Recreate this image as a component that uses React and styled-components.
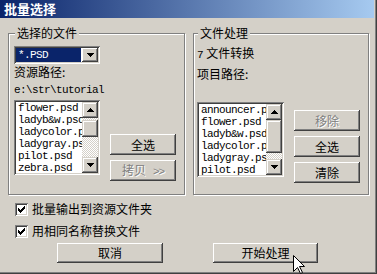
import React from "react";
import styled, { createGlobalStyle } from "styled-components";

const GlobalStyle = createGlobalStyle`
  html, body {
    margin: 0;
    padding: 0;
    background: #d4d0c8;
  }
  body {
    font-family: "Noto Sans CJK SC", "Liberation Sans", sans-serif;
    font-size: 12px;
    color: #000;
  }
`;

const raised = `
  box-shadow: inset -1px -1px 0 #404040, inset 1px 1px 0 #ffffff,
    inset -2px -2px 0 #808080;
`;

const sunken = `
  box-shadow: inset 1px 1px 0 #808080, inset -1px -1px 0 #ffffff,
    inset 2px 2px 0 #404040, inset -2px -2px 0 #d4d0c8;
`;

const leftFiles = [
  "flower.psd",
  "ladyb&w.psd",
  "ladycolor.psd",
  "ladygray.psd",
  "pilot.psd",
  "zebra.psd",
];

const rightFiles = [
  "announcer.psd",
  "flower.psd",
  "ladyb&w.psd",
  "ladycolor.psd",
  "ladygray.psd",
  "pilot.psd",
];

function Arrow({ down }) {
  return (
    <svg width="7" height="4" viewBox="0 0 7 4" shapeRendering="crispEdges">
      {down ? (
        <path d="M0 0h7v1h-1v1h-1v1h-1v1h-1v-1h-1v-1h-1v-1h-1z" fill="#000" />
      ) : (
        <path d="M3 0h1v1h1v1h1v1h1v1h-7v-1h1v-1h1v-1h1z" fill="#000" />
      )}
    </svg>
  );
}

function Check() {
  const cols = [2, 3, 4, 3, 2, 1, 0];
  return (
    <svg width="7" height="7" viewBox="0 0 7 7" shapeRendering="crispEdges">
      {cols.map((y, x) => (
        <rect key={x} x={x} y={y} width="1" height="3" fill="#000" />
      ))}
    </svg>
  );
}

function Cursor() {
  return (
    <svg width="13" height="20" viewBox="0 0 13 20">
      <path
        d="M0.5 0.5 L0.5 16.5 L4.5 12.5 L7.5 18.5 L9.5 17.5 L6.5 11.5 L11.5 11.5 Z"
        fill="#fff"
        stroke="#000"
        strokeWidth="1"
      />
    </svg>
  );
}

function List({ items, width, thumbTop, thumbHeight }) {
  return (
    <ListBox $w={width}>
      <Items>
        {items.map((f) => (
          <Item key={f}>{f}</Item>
        ))}
      </Items>
      <ScrollBar>
        <ScrollButton>
          <Arrow />
        </ScrollButton>
        <Track>
          <Thumb $top={thumbTop} $h={thumbHeight} />
        </Track>
        <ScrollButton>
          <Arrow down />
        </ScrollButton>
      </ScrollBar>
    </ListBox>
  );
}

export default function App() {
  return (
    <>
      <GlobalStyle />
      <Window>
        <TitleBar>批量选择</TitleBar>
        <Body>
          <GroupRow>
            <Group $w={177} $pad={5}>
              <Legend $left={6}>选择的文件</Legend>
              <Combo>
                <ComboValue>*.PSD</ComboValue>
                <ComboButton>
                  <Arrow down />
                </ComboButton>
              </Combo>
              <Label $mt={1}>资源路径:</Label>
              <Path>e:\str\tutorial</Path>
              <ListRow>
                <List items={leftFiles} width={86} thumbTop={2} thumbHeight={17} />
                <ButtonCol $offset={34}>
                  <Button $w={66} $h={21}>全选</Button>
                  <Button $w={66} $h={21} disabled>
                    拷贝<Chevrons>&gt;&gt;</Chevrons>
                  </Button>
                </ButtonCol>
              </ListRow>
            </Group>
            <Group $w={176} $pad={3}>
              <Legend $left={4}>文件处理</Legend>
              <Label $mt={0}>
                <Num>7</Num> 文件转换
              </Label>
              <Label $mt={5}>项目路径:</Label>
              <Path>&nbsp;</Path>
              <ListRow>
                <List items={rightFiles} width={87} thumbTop={0} thumbHeight={33} />
                <ButtonCol $offset={8}>
                  <Button $w={66} $h={21} disabled>
                    移除
                  </Button>
                  <Button $w={66} $h={21}>全选</Button>
                  <Button $w={66} $h={21}>清除</Button>
                </ButtonCol>
              </ListRow>
            </Group>
          </GroupRow>
          <Options>
            <Option>
              <CheckBox>
                <Check />
              </CheckBox>
              批量输出到资源文件夹
            </Option>
            <Option>
              <CheckBox>
                <Check />
              </CheckBox>
              用相同名称替换文件
            </Option>
          </Options>
          <Footer>
            <Button $w={106} $h={20}>取消</Button>
            <Button $w={105} $h={20}>开始处理</Button>
          </Footer>
        </Body>
        <CursorWrap>
          <Cursor />
        </CursorWrap>
      </Window>
    </>
  );
}

const Window = styled.div`
  position: relative;
  width: 377px;
  height: 274px;
  box-sizing: border-box;
  padding-right: 3px;
  background: #d4d0c8;
  box-shadow: inset -1px -1px 0 #404040, inset -2px -2px 0 #808080;
  overflow: hidden;
  display: flex;
  flex-direction: column;
`;

const TitleBar = styled.div`
  height: 18px;
  flex: none;
  display: flex;
  align-items: center;
  padding-left: 4px;
  background: linear-gradient(to right, #0a246a, #a6caf0);
  color: #fff;
  font-weight: bold;
  font-size: 13px;
  line-height: 18px;
`;

const Body = styled.div`
  display: flex;
  flex-direction: column;
  padding-left: 8px;
`;

const GroupRow = styled.div`
  display: flex;
  gap: 8px;
  margin-top: 15px;
`;

const Group = styled.div`
  position: relative;
  width: ${(p) => p.$w}px;
  height: 162px;
  box-sizing: border-box;
  border: 1px solid #808080;
  box-shadow: inset 1px 1px 0 #fff, 1px 1px 0 #fff;
  padding: 12px 0 0 ${(p) => p.$pad}px;
  display: flex;
  flex-direction: column;
`;

const Legend = styled.span`
  position: absolute;
  top: -8px;
  left: ${(p) => p.$left}px;
  padding: 0 2px;
  background: #d4d0c8;
  line-height: 14px;
`;

const Combo = styled.div`
  width: 86px;
  height: 18px;
  box-sizing: border-box;
  padding: 2px;
  background: #fff;
  ${sunken}
  display: flex;
  gap: 1px;
`;

const ComboValue = styled.div`
  flex: 1;
  background: #0a246a;
  color: #fff;
  padding-left: 2px;
  font-family: "Liberation Mono", monospace;
  font-size: 11px;
  letter-spacing: -0.6px;
  line-height: 14px;
`;

const ComboButton = styled.div`
  width: 16px;
  height: 14px;
  background: #d4d0c8;
  ${raised}
  display: flex;
  align-items: center;
  justify-content: center;
`;

const Label = styled.div`
  line-height: 14px;
  margin-top: ${(p) => p.$mt}px;
  white-space: nowrap;
`;

const Num = styled.span`
  font-family: "Liberation Mono", monospace;
  font-size: 11px;
`;

const Path = styled.div`
  margin-top: 4px;
  line-height: 14px;
  font-family: "Liberation Mono", monospace;
  font-size: 11px;
  letter-spacing: -0.6px;
  white-space: nowrap;
`;

const ListRow = styled.div`
  display: flex;
  align-items: flex-start;
  gap: 10px;
  margin-top: 3px;
`;

const ListBox = styled.div`
  width: ${(p) => p.$w}px;
  height: 75px;
  box-sizing: border-box;
  padding: 2px;
  background: #fff;
  ${sunken}
  display: flex;
`;

const Items = styled.div`
  flex: 1;
  min-width: 0;
  overflow: hidden;
  padding-left: 2px;
`;

const Item = styled.div`
  font-family: "Liberation Mono", monospace;
  font-size: 11px;
  letter-spacing: -0.6px;
  line-height: 12px;
  white-space: nowrap;
`;

const ScrollBar = styled.div`
  width: 16px;
  flex: none;
  display: flex;
  flex-direction: column;
`;

const ScrollButton = styled.div`
  height: 16px;
  flex: none;
  background: #d4d0c8;
  box-shadow: inset -1px -1px 0 #404040, inset 1px 1px 0 #d4d0c8,
    inset -2px -2px 0 #808080, inset 2px 2px 0 #ffffff;
  display: flex;
  align-items: center;
  justify-content: center;
`;

const Track = styled.div`
  flex: 1;
  background: repeating-conic-gradient(#ffffff 0 25%, #d4d0c8 0 50%) 0 0 / 2px 2px;
  overflow: hidden;
`;

const Thumb = styled.div`
  margin-top: ${(p) => p.$top}px;
  height: ${(p) => p.$h}px;
  background: #d4d0c8;
  box-shadow: inset -1px -1px 0 #404040, inset 1px 1px 0 #d4d0c8,
    inset -2px -2px 0 #808080, inset 2px 2px 0 #ffffff;
`;

const ButtonCol = styled.div`
  display: flex;
  flex-direction: column;
  gap: 5px;
  margin-top: ${(p) => p.$offset}px;
`;

const Button = styled.button`
  width: ${(p) => p.$w}px;
  height: ${(p) => p.$h}px;
  padding: 0;
  border: none;
  background: #d4d0c8;
  ${raised}
  font-family: "Noto Sans CJK SC", "Liberation Sans", sans-serif;
  font-size: 12px;
  line-height: 14px;
  color: ${(p) => (p.disabled ? "#808080" : "#000")};
  text-shadow: ${(p) => (p.disabled ? "1px 1px 0 #fff" : "none")};
`;

const Chevrons = styled.span`
  margin-left: 7px;
  font-family: "Liberation Mono", monospace;
  font-size: 11px;
  letter-spacing: -1px;
`;

const Options = styled.div`
  display: flex;
  flex-direction: column;
  gap: 8px;
  margin: 7px 0 0 7px;
`;

const Option = styled.label`
  display: flex;
  align-items: center;
  gap: 4px;
  line-height: 14px;
  height: 14px;
`;

const CheckBox = styled.span`
  width: 13px;
  height: 13px;
  box-sizing: border-box;
  background: #fff;
  ${sunken}
  display: flex;
  align-items: center;
  justify-content: center;
`;

const Footer = styled.div`
  display: flex;
  gap: 50px;
  margin: 5px 0 0 49px;
`;

const CursorWrap = styled.div`
  position: absolute;
  left: 293px;
  top: 255px;
  line-height: 0;
`;
